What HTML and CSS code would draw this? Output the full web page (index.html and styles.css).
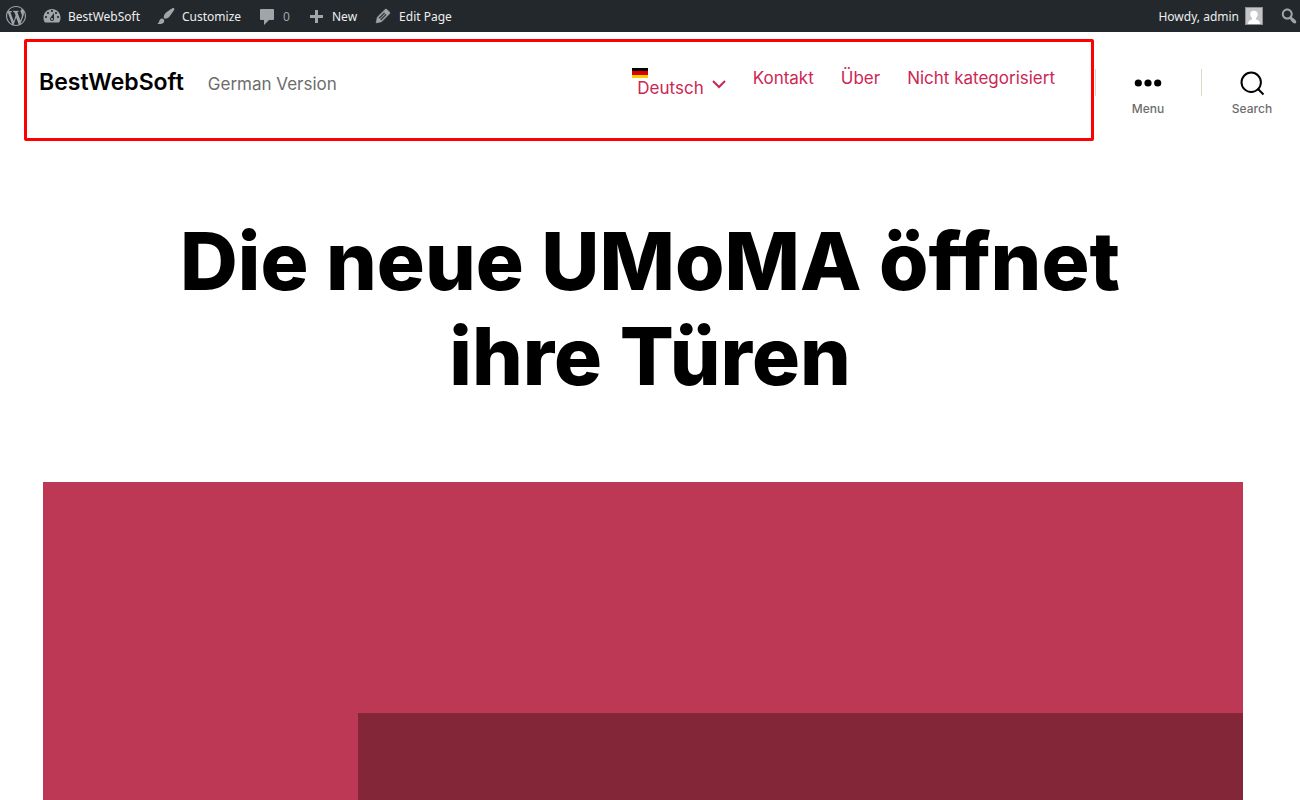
FILE: index.html
```html
<!DOCTYPE html>
<html lang="de">
<head>
  <meta charset="UTF-8">
  <meta name="viewport" content="width=device-width, initial-scale=1.0">
  <title>Die neue UMoMA öffnet ihre Türen</title>
  <link rel="stylesheet" href="styles.css">
</head>
<body>

  <nav class="adminbar" aria-label="Toolbar">
    <a class="wp-logo" href="#" aria-label="About WordPress">
      <svg viewBox="0 0 20 20"><path d="M20 10c0-5.51-4.49-10-10-10C4.48 0 0 4.49 0 10c0 5.52 4.48 10 10 10 5.51 0 10-4.48 10-10zM7.78 15.37L4.37 6.22c.55-.02 1.17-.08 1.17-.08.5-.06.44-1.13-.06-1.11 0 0-1.45.11-2.37.11-.18 0-.37 0-.58-.01C4.12 2.69 6.87 1.11 10 1.11c2.33 0 4.45.87 6.05 2.34-.68-.11-1.65.39-1.65 1.58 0 .74.45 1.36.9 2.1.35.61.55 1.36.55 2.46 0 1.49-1.4 5-1.4 5l-3.03-8.37c.54-.02.82-.17.82-.17.5-.05.44-1.25-.06-1.22 0 0-1.44.12-2.38.12-.87 0-2.33-.12-2.33-.12-.5-.03-.56 1.2-.06 1.22l.92.08 1.26 3.41zM17.41 10c.24-.64.74-1.87.43-4.25.7 1.29 1.05 2.71 1.05 4.25 0 3.29-1.73 6.24-4.4 7.78.97-2.59 1.94-5.2 2.92-7.78zM6.1 18.09C3.12 16.65 1.11 13.53 1.11 10c0-1.3.23-2.48.72-3.59C3.25 10.3 4.67 14.2 6.1 18.09zm4.03-6.63l2.58 6.98c-.86.29-1.76.45-2.71.45-.79 0-1.57-.11-2.29-.33.81-2.38 1.62-4.74 2.42-7.1z"/></svg>
    </a>
    <a href="#">
      <svg viewBox="0 0 20 20"><path d="M3 16.500h14c1.100-1.370 1.500-3.110 1.500-5 0-4.700-3.800-8.500-8.500-8.500s-8.500 3.800-8.500 8.500c0 1.890.4 3.630 1.500 5zM10 4c.55 0 1 .45 1 1s-.45 1-1 1-1-.45-1-1 .45-1 1-1zM6 6c.55 0 1 .45 1 1s-.45 1-1 1-1-.45-1-1 .45-1 1-1zm8 0c.55 0 1 .45 1 1s-.45 1-1 1-1-.45-1-1 .45-1 1-1zm-5.370 5.550L12 7v6c0 1.100-.9 2-2 2s-2-.9-2-2c0-.57.24-1.080.63-1.450zM4 10c.55 0 1 .45 1 1s-.45 1-1 1-1-.45-1-1 .45-1 1-1zm12 0c.55 0 1 .45 1 1s-.45 1-1 1-1-.45-1-1 .45-1 1-1zm-5 3c0-.55-.45-1-1-1s-1 .45-1 1 .45 1 1 1 1-.45 1-1z"/></svg>
      BestWebSoft
    </a>
    <a href="#">
      <svg viewBox="0 0 20 20"><path d="M18.33 3.57s.27-.8-.31-1.36c-.53-.52-1.22-.24-1.22-.24-.61.3-5.76 3.47-7.67 5.57-.86.96-2.06 3.79-1.09 4.82.92.98 3.96-.17 4.79-1 2.06-2.06 5.21-7.17 5.5-7.79zM1.4 17.65c2.37-1.56 1.46-3.41 3.23-4.64.93-.65 2.22-.62 3.08.29.63.67.8 2.57-.16 3.46-1.57 1.45-4 1.55-6.15.89z"/></svg>
      Customize
    </a>
    <a class="comments" href="#">
      <svg viewBox="0 0 20 20"><path d="M4 3h12q1 0 1 1v9q0 1-1 1h-4l-5 5v-5H4q-1 0-1-1V4q0-1 1-1z"/></svg>
      0
    </a>
    <a href="#">
      <svg viewBox="0 0 20 20"><path d="M17 9v3h-5v5H9v-5H4V9h5V4h3v5h5z"/></svg>
      New
    </a>
    <a href="#">
      <svg class="pencil" viewBox="0 0 20 20"><path d="M13.89 3.39l2.71 2.72c.46.46.42 1.24.03 1.64l-8.01 8.02-5.56 1.16 1.16-5.58s7.6-7.63 7.99-8.03c.39-.39 1.22-.39 1.68.07zm-2.73 2.79l-5.59 5.61 1.11 1.11 5.54-5.65zm-2.97 8.23l5.58-5.6-1.07-1.08-5.59 5.6z"/></svg>
      Edit Page
    </a>
    <a class="account" href="#">
      Howdy, admin
      <svg class="avatar" viewBox="0 0 18 18"><path fill="#8c8f94" d="M0 0h18v18H0z"/><path fill="#c5c5c5" d="M1 1h16v16H1z"/><circle cx="9" cy="7.5" r="3.7" fill="#fff"/><path fill="#fff" d="M3 17c0-3 2-4 4-4.500V10h4v2.500c2 .5 4 1.500 4 4.500z"/></svg>
    </a>
    <button class="bar-search" aria-label="Search">
      <svg viewBox="0 0 20 20"><path d="M12.14 4.18c1.87 1.87 2.11 4.75.72 6.89.12.1.22.21.36.31.2.16.47.36.81.59.34.24.56.39.66.47.42.31.73.57.94.78.32.32.6.65.84 1 .25.35.44.69.59 1.04.14.35.21.68.18 1-.02.32-.14.59-.36.81s-.49.34-.81.36c-.31.02-.65-.04-.99-.19-.35-.14-.7-.34-1.04-.59-.35-.24-.68-.52-1-.84-.21-.21-.47-.52-.77-.93-.1-.13-.25-.35-.47-.66-.22-.32-.4-.57-.56-.78-.16-.2-.29-.35-.44-.5-2.07 1.09-4.69.76-6.44-.98-2.14-2.15-2.14-5.64 0-7.78 2.15-2.15 5.63-2.15 7.78 0zm-1.41 6.36c1.36-1.37 1.36-3.58 0-4.95-1.37-1.37-3.59-1.37-4.95 0-1.37 1.37-1.37 3.58 0 4.95 1.36 1.37 3.58 1.37 4.95 0z"/></svg>
    </button>
  </nav>

  <header class="site-header">
    <div class="header-main">
      <a class="site-title" href="#">BestWebSoft</a>
      <span class="site-description">German Version</span>
      <nav class="primary-menu">
        <a class="language" href="#">
          <svg class="flag" viewBox="0 0 16 10"><path d="M0 0h16v4H0z"/><path fill="#d00" d="M0 3h16v4H0z"/><path fill="#ffce00" d="M0 7h16v3H0z"/></svg>
          <span>Deutsch</span>
          <svg class="arrow" viewBox="0 0 14 9"><path d="M1 1l6 6 6-6"/></svg>
        </a>
        <a href="#">Kontakt</a>
        <a href="#">Über</a>
        <a href="#">Nicht kategorisiert</a>
      </nav>
    </div>
    <div class="toggles">
      <button class="toggle">
        <svg viewBox="0 0 26 26"><circle cx="3.3" cy="13" r="3.6"/><circle cx="13" cy="13" r="3.6"/><circle cx="22.7" cy="13" r="3.6"/></svg>
        Menu
      </button>
      <button class="toggle">
        <svg class="lens" viewBox="0 0 26 26"><circle cx="12.2" cy="12.3" r="9.7"/><path d="M18.5 18.5l6 6"/></svg>
        Search
      </button>
    </div>
  </header>

  <main>
    <h1>Die neue UMoMA öffnet ihre Türen</h1>
    <div class="featured">
      <div class="featured-block"></div>
    </div>
  </main>

</body>
</html>
```
FILE: styles.css
```css
* {
  box-sizing: border-box;
}

body {
  margin: 0;
  background: #fff;
  color: #000;
  font-family: Inter, sans-serif;
  height: 100vh;
  display: flex;
  flex-direction: column;
  overflow: hidden;
}

a {
  text-decoration: none;
}

button {
  border: none;
  background: none;
  padding: 0;
  font-family: inherit;
  cursor: pointer;
}

/* Admin bar */
.adminbar {
  display: flex;
  flex-shrink: 0;
  align-items: center;
  gap: 16px;
  height: 32px;
  padding: 0 1px 0 6px;
  background: #23282d;
  font-family: "Noto Sans", sans-serif;
  font-size: 12px;
}

.adminbar a {
  display: flex;
  align-items: center;
  gap: 6px;
  color: #eee;
}

.adminbar svg {
  width: 20px;
  height: 20px;
  fill: #a0a5aa;
}

.adminbar .pencil {
  stroke: #a0a5aa;
  stroke-width: .5;
}

.adminbar .comments {
  color: #a0a5aa;
}

.adminbar .account {
  margin-left: auto;
}

.adminbar .avatar {
  width: 18px;
  height: 18px;
}

.bar-search {
  display: flex;
}

/* Header */
.site-header {
  display: flex;
  align-items: flex-start;
  padding: 7px 0 0 24px;
}

.header-main {
  flex: 1;
  display: flex;
  align-items: baseline;
  height: 102px;
  padding: 26px 36px 0 12px;
  border: 3px solid #f00;
  border-radius: 2px;
}

.site-title {
  color: #000;
  font-size: 23px;
  font-weight: 600;
}

.site-description {
  margin-left: 24px;
  color: #6d6d6d;
  font-size: 17px;
}

.primary-menu {
  display: flex;
  align-items: flex-start;
  align-self: flex-start;
  gap: 27px;
  margin-left: auto;
  font-size: 17px;
  line-height: 20px;
}

.primary-menu a {
  color: #cd2653;
}

.language {
  display: grid;
  grid-template-columns: auto auto;
  align-items: center;
  column-gap: 8px;
}

.language span {
  padding-left: 5px;
}

.flag {
  grid-column: span 2;
  width: 16px;
  height: 10px;
}

.arrow {
  width: 14px;
  height: 9px;
  margin-bottom: 8px;
  fill: none;
  stroke: #cd2653;
  stroke-width: 2;
}

.toggles {
  display: flex;
  padding-top: 30px;
}

.toggle {
  width: 106px;
  display: flex;
  flex-direction: column;
  align-items: center;
  gap: 5px;
  padding: 1px 0 0 2px;
  color: #6d6d6d;
  font-size: 12px;
  font-weight: 500;
  line-height: 16px;
  background: linear-gradient(#dcd7ca, #dcd7ca) 1px 0 / 1px 27px no-repeat;
}

.toggle:last-child {
  width: 100px;
  padding-left: 4px;
}

.toggle svg {
  width: 26px;
  height: 26px;
  overflow: visible;
}

.toggle .lens {
  fill: none;
  stroke: #000;
  stroke-width: 2;
}

/* Page */
h1 {
  max-width: 1000px;
  margin: 72px auto 79px;
  font-size: 80px;
  font-weight: 800;
  line-height: 95px;
  text-align: center;
}

main {
  flex: 1;
  display: flex;
  flex-direction: column;
}

.featured {
  flex: 1;
  display: flex;
  margin: 0 57px 0 43px;
  padding: 231px 0 0 315px;
  background: #bc3854;
}

.featured-block {
  flex: 1;
  background: #832638;
}
```
